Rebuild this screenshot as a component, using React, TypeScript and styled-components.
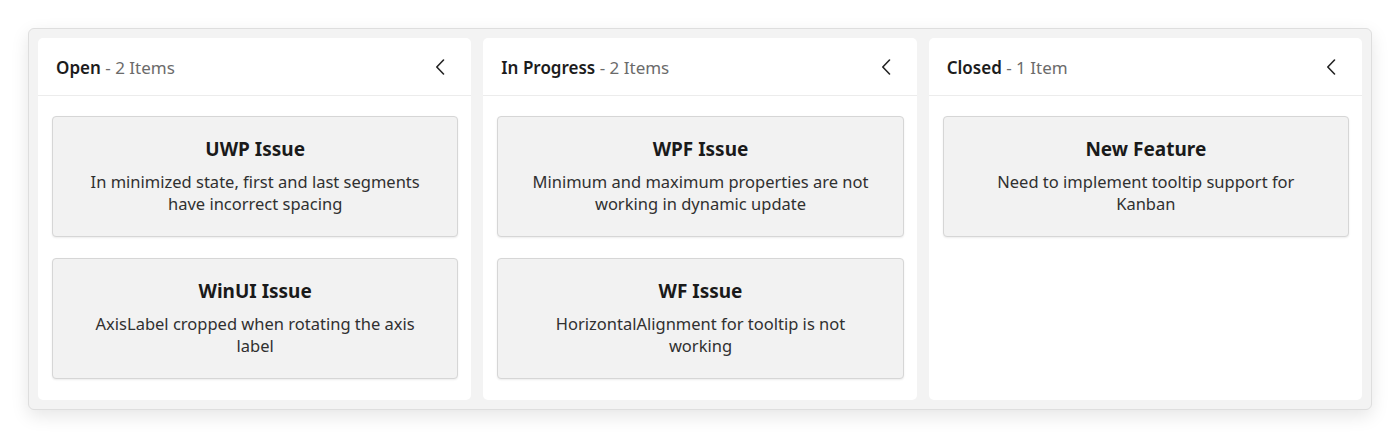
import React from "react";
import styled, { createGlobalStyle } from "styled-components";

const Global = createGlobalStyle`
  html, body { margin: 0; padding: 0; background: #ffffff; }
  body { font-family: "Noto Sans", "Open Sans", "Liberation Sans", sans-serif; }
  * { box-sizing: border-box; }
`;

const Page = styled.div`
  padding: 28px 28px 0 28px;
  width: 1400px;
  height: 438px;
`;

const Board = styled.div`
  background: #f3f3f3;
  border: 1px solid #dedede;
  border-radius: 6px;
  box-shadow: 0 6px 18px rgba(0, 0, 0, 0.1);
  padding: 9px;
  display: grid;
  grid-template-columns: repeat(3, 1fr);
  gap: 12px;
  height: 382px;
`;

const Column = styled.section`
  background: #ffffff;
  border-radius: 5px;
  display: flex;
  flex-direction: column;
`;

const Header = styled.div`
  height: 58px;
  display: flex;
  align-items: center;
  justify-content: space-between;
  padding: 1px 24px 0 18px;
  border-bottom: 1px solid #ececec;
`;

const HeaderTitle = styled.div`
  font-size: 17px;
  color: #6b6b6b;
  white-space: nowrap;
`;

const HeaderName = styled.span`
  font-weight: 600;
  color: #1c1c1c;
`;

const Collapse = styled.button`
  border: none;
  background: transparent;
  padding: 0;
  width: 14px;
  height: 18px;
  display: flex;
  align-items: center;
  justify-content: center;
  color: #242424;
  cursor: pointer;
`;

const Cards = styled.div`
  display: flex;
  flex-direction: column;
  gap: 21px;
  padding: 20px 13px 0 14px;
`;

const Card = styled.div`
  background: #f2f2f2;
  border: 1px solid #d6d6d6;
  border-radius: 4px;
  box-shadow: 0 1px 2px rgba(0, 0, 0, 0.08);
  height: 121px;
  padding: 19px 29px 0 29px;
  text-align: center;
`;

const CardTitle = styled.div`
  font-size: 19px;
  font-weight: 700;
  color: #1a1a1a;
  line-height: 26px;
`;

const CardText = styled.div`
  margin-top: 9px;
  font-size: 16.5px;
  line-height: 22px;
  color: #303030;
`;

const Chevron = () => (
  <svg width="10" height="16" viewBox="0 0 10 16" fill="none">
    <path d="M8.5 1 L1.8 8 L8.5 15" stroke="currentColor" strokeWidth="1.6" strokeLinecap="round" strokeLinejoin="round" />
  </svg>
);

type Item = { title: string; text: string };
type Col = { name: string; count: string; items: Item[] };

const data: Col[] = [
  {
    name: "Open",
    count: "2 Items",
    items: [
      { title: "UWP Issue", text: "In minimized state, first and last segments have incorrect spacing" },
      { title: "WinUI Issue", text: "AxisLabel cropped when rotating the axis label" },
    ],
  },
  {
    name: "In Progress",
    count: "2 Items",
    items: [
      { title: "WPF Issue", text: "Minimum and maximum properties are not working in dynamic update" },
      { title: "WF Issue", text: "HorizontalAlignment for tooltip is not working" },
    ],
  },
  {
    name: "Closed",
    count: "1 Item",
    items: [{ title: "New Feature", text: "Need to implement tooltip support for Kanban" }],
  },
];

export default function App() {
  return (
    <Page>
      <Global />
      <Board>
        {data.map((c) => (
          <Column key={c.name}>
            <Header>
              <HeaderTitle>
                <HeaderName>{c.name}</HeaderName> - {c.count}
              </HeaderTitle>
              <Collapse aria-label="Collapse">
                <Chevron />
              </Collapse>
            </Header>
            <Cards>
              {c.items.map((it) => (
                <Card key={it.title}>
                  <CardTitle>{it.title}</CardTitle>
                  <CardText>{it.text}</CardText>
                </Card>
              ))}
            </Cards>
          </Column>
        ))}
      </Board>
    </Page>
  );
}
